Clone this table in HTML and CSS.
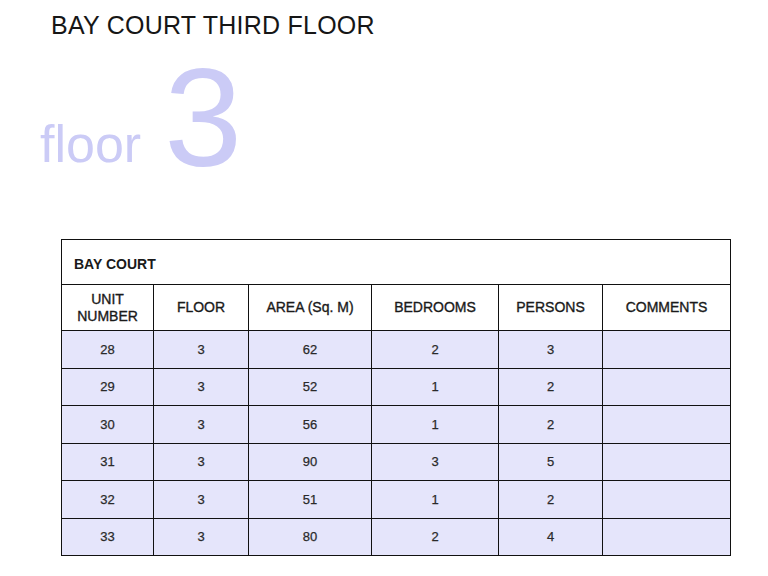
FILE: index.html
```html
<!DOCTYPE html>
<html>
<head>
<meta charset="utf-8">
<link rel="stylesheet" href="styles.css">
</head>
<body>
<div class="page">
  <h1 class="title">BAY COURT THIRD FLOOR</h1>
  <div class="hero"><span class="hero-word">floor</span><span class="hero-num">3</span></div>
  <table class="units">
    <colgroup>
      <col class="c1"><col class="c2"><col class="c3"><col class="c4"><col class="c5"><col class="c6">
    </colgroup>
    <thead>
      <tr class="caption-row"><th colspan="6" class="caption">BAY COURT</th></tr>
      <tr class="head-row">
        <th>UNIT<br>NUMBER</th>
        <th>FLOOR</th>
        <th>AREA (Sq. M)</th>
        <th>BEDROOMS</th>
        <th>PERSONS</th>
        <th>COMMENTS</th>
      </tr>
    </thead>
    <tbody>
      <tr><td>28</td><td>3</td><td>62</td><td>2</td><td>3</td><td></td></tr>
      <tr><td>29</td><td>3</td><td>52</td><td>1</td><td>2</td><td></td></tr>
      <tr><td>30</td><td>3</td><td>56</td><td>1</td><td>2</td><td></td></tr>
      <tr><td>31</td><td>3</td><td>90</td><td>3</td><td>5</td><td></td></tr>
      <tr><td>32</td><td>3</td><td>51</td><td>1</td><td>2</td><td></td></tr>
      <tr><td>33</td><td>3</td><td>80</td><td>2</td><td>4</td><td></td></tr>
    </tbody>
  </table>
</div>
</body>
</html>
```
FILE: styles.css
```css
html, body {
  margin: 0;
  padding: 0;
  background: #ffffff;
}

.page {
  font-family: "Liberation Sans", Arial, sans-serif;
  padding: 11px 0 0 0;
}

.title {
  margin: 0 0 0 51px;
  font-size: 25px;
  line-height: 28px;
  letter-spacing: 0.25px;
  font-weight: normal;
  color: #161616;
}

.hero {
  margin: 19px 0 0 40px;
  height: 120px;
  font-size: 140px;
  line-height: 120px;
  color: #cbcbf6;
  white-space: nowrap;
}

.hero-word {
  font-size: 52px;
  vertical-align: 4px;
}

.hero-num {
  margin-left: 23px;
}

.units {
  margin: 61px 0 0 61px;
  border-collapse: collapse;
  table-layout: fixed;
  width: 669px;
  color: #2a2a2a;
}

.units th,
.units td {
  border: 1px solid #111111;
  text-align: center;
  padding: 0;
}

.c1 { width: 92px; }
.c2 { width: 95px; }
.c3 { width: 123px; }
.c4 { width: 127px; }
.c5 { width: 104px; }
.c6 { width: 128px; }

.caption-row {
  height: 45px;
}

.units .caption {
  text-align: left;
  padding-left: 12px;
  padding-top: 4px;
  font-size: 14px;
  font-weight: bold;
  color: #1a1a1a;
}

.head-row {
  height: 46px;
}

.units .head-row th {
  font-size: 14px;
  line-height: 17px;
  font-weight: normal;
  color: #1a1a1a;
  -webkit-text-stroke: 0.35px #1a1a1a;
}

.units tbody tr {
  height: 37.5px;
}

.units tbody td {
  background: #e5e5fb;
  font-size: 13px;
  color: #2a2a2a;
  -webkit-text-stroke: 0.25px #2a2a2a;
}
```
